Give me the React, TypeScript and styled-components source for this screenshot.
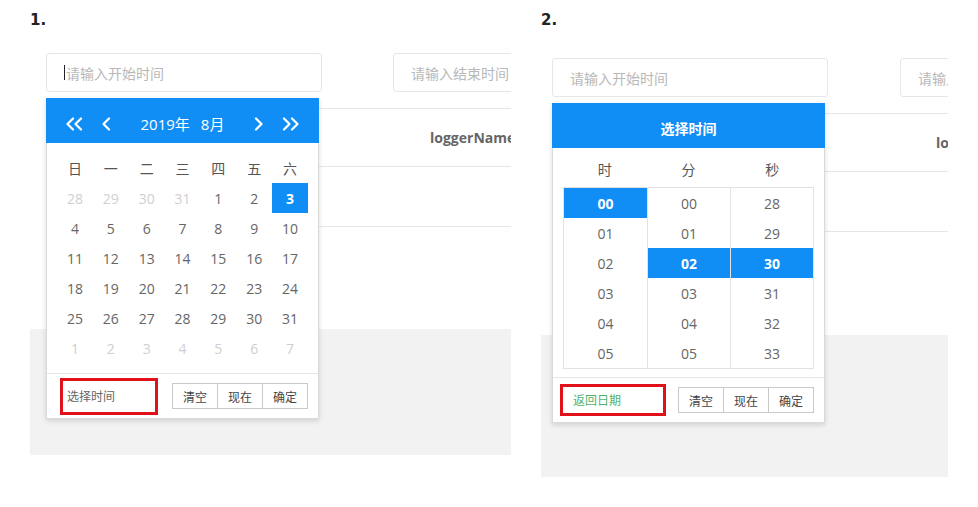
import styled, { createGlobalStyle } from "styled-components";

const GlobalStyle = createGlobalStyle`
  body {
    margin: 0;
    background: #fff;
    font-family: "Open Sans", "Noto Sans CJK SC", sans-serif;
  }
`;

const Page = styled.div`
  display: flex;
  gap: 30px;
  padding-left: 30px;
`;

const Column = styled.div<{ $width: number }>`
  display: flex;
  flex-direction: column;
  width: ${(p) => p.$width}px;
  flex-shrink: 0;
`;

const Label = styled.div`
  height: 40px;
  line-height: 40px;
  font-family: "DejaVu Sans", sans-serif;
  font-weight: bold;
  font-size: 15px;
  color: #222;
`;

const Shot = styled.div`
  position: relative;
  display: flex;
  flex-direction: column;
  overflow: hidden;
`;

const InputRow = styled.div<{ $top: number; $inset: number; $gap: number }>`
  display: flex;
  gap: ${(p) => p.$gap}px;
  margin-top: ${(p) => p.$top}px;
  padding-left: ${(p) => p.$inset}px;
`;

const TextInput = styled.div<{ $width: number }>`
  display: flex;
  align-items: center;
  flex-shrink: 0;
  box-sizing: border-box;
  width: ${(p) => p.$width}px;
  height: 39px;
  padding-left: 17px;
  border: 1px solid #e6e6e6;
  border-radius: 3px;
  font-size: 14px;
  color: #b8b8b8;
  white-space: nowrap;
`;

const Caret = styled.span`
  width: 1px;
  height: 15px;
  margin-right: 1px;
  background: #222;
`;

const Table = styled.div<{ $inset: number }>`
  margin-top: 16px;
  margin-left: ${(p) => p.$inset}px;
  border-top: 1px solid #e6e6e6;
`;

const HeadRow = styled.div`
  display: flex;
  align-items: center;
  box-sizing: border-box;
  height: 58px;
  padding-left: 384px;
  border-bottom: 1px solid #e6e6e6;
  font-size: 14px;
  font-weight: bold;
  color: #666;
  white-space: nowrap;
`;

const BodyRow = styled.div`
  box-sizing: border-box;
  height: 60px;
  border-bottom: 1px solid #e6e6e6;
`;

const GrayArea = styled.div<{ $top: number; $height: number }>`
  margin-top: ${(p) => p.$top}px;
  height: ${(p) => p.$height}px;
  background: #f2f2f2;
`;

const BLUE = "#108ef5";

const Popup = styled.div<{ $left: number; $top: number }>`
  position: absolute;
  left: ${(p) => p.$left}px;
  top: ${(p) => p.$top}px;
  width: 273px;
  box-sizing: border-box;
  border: 1px solid #d9d9d9;
  background: #fff;
  box-shadow: 0 2px 5px rgba(0, 0, 0, 0.14);
  font-size: 14px;
`;

const CalHeader = styled.div`
  display: grid;
  grid-template-columns: 1fr auto 1fr;
  align-items: center;
  box-sizing: border-box;
  height: 45px;
  margin: -1px -1px 0;
  padding: 6px 20px 0;
  background: ${BLUE};
  color: #fff;
  font-size: 15px;
`;

const NavGroup = styled.div<{ $end?: boolean }>`
  display: flex;
  align-items: center;
  gap: 19px;
  justify-content: ${(p) => (p.$end ? "flex-end" : "flex-start")};
`;

const Title = styled.div`
  display: flex;
  gap: 11px;
`;

const TimeHeader = styled.div`
  display: flex;
  align-items: center;
  justify-content: center;
  box-sizing: border-box;
  height: 45px;
  margin: -1px -1px 0;
  padding-top: 4px;
  background: ${BLUE};
  color: #fff;
  font-size: 14px;
  font-weight: bold;
`;

const CalBody = styled.div`
  padding: 10px;
`;

const DayGrid = styled.div`
  display: grid;
  grid-template-columns: repeat(7, 1fr);
  grid-auto-rows: 30px;
`;

const Cell = styled.div<{ $tone: "head" | "muted" | "normal" | "active" }>`
  display: flex;
  align-items: center;
  justify-content: center;
  color: ${(p) =>
    p.$tone === "muted" ? "#cfcfcf" : p.$tone === "head" ? "#555" : p.$tone === "active" ? "#fff" : "#666"};
  background: ${(p) => (p.$tone === "active" ? BLUE : "transparent")};
  font-weight: ${(p) => (p.$tone === "active" ? "bold" : "normal")};
`;

const TimeBody = styled.div`
  padding: 6px 10px 8px;
`;

const TimeLabels = styled.div`
  display: grid;
  grid-template-columns: repeat(3, 1fr);
  height: 30px;
  margin-bottom: 3px;
  align-items: center;
  justify-items: center;
  color: #555;
`;

const TimeGrid = styled.div`
  display: grid;
  grid-template-columns: repeat(3, 1fr);
  border: 1px solid #e2e2e2;
`;

const TimeColumn = styled.div`
  display: flex;
  flex-direction: column;
  & + & {
    border-left: 1px solid #e2e2e2;
  }
`;

const TimeCell = styled.div<{ $active?: boolean }>`
  display: flex;
  align-items: center;
  justify-content: center;
  height: 30px;
  color: ${(p) => (p.$active ? "#fff" : "#666")};
  background: ${(p) => (p.$active ? BLUE : "transparent")};
  font-weight: ${(p) => (p.$active ? "bold" : "normal")};
`;

const Footer = styled.div`
  display: flex;
  align-items: center;
  justify-content: space-between;
  box-sizing: border-box;
  height: 45px;
  padding: 0 10px;
  border-top: 1px solid #e6e6e6;
`;

const Marked = styled.span<{ $w: number; $h: number; $ml: number; $pl: number; $color: string }>`
  display: flex;
  align-items: center;
  box-sizing: border-box;
  width: ${(p) => p.$w}px;
  height: ${(p) => p.$h}px;
  margin-left: ${(p) => p.$ml}px;
  padding-left: ${(p) => p.$pl}px;
  border: 3px solid #e1111a;
  font-size: 12px;
  color: ${(p) => p.$color};
`;

const Buttons = styled.div`
  display: flex;
`;

const Btn = styled.span`
  display: flex;
  align-items: center;
  justify-content: center;
  box-sizing: border-box;
  width: 46px;
  height: 26px;
  padding-top: 2px;
  border: 1px solid #c9c9c9;
  background: #fff;
  font-size: 12px;
  color: #444;
  & + & {
    margin-left: -1px;
  }
`;

function Chevron({ double, right }: { double?: boolean; right?: boolean }) {
  const w = double ? 17 : 9;
  return (
    <svg width={w} height={14} viewBox={`0 0 ${w} 14`} style={{ transform: right ? "scaleX(-1)" : undefined }}>
      <g fill="none" stroke="#fff" strokeWidth={2.2} strokeLinecap="round" strokeLinejoin="round">
        <polyline points="7,1.5 1.5,7 7,12.5" />
        {double && <polyline points="15,1.5 9.5,7 15,12.5" />}
      </g>
    </svg>
  );
}

const weekdays = ["日", "一", "二", "三", "四", "五", "六"];

type Day = { n: number; tone: "muted" | "normal" | "active" };

function buildDays(): Day[] {
  const days: Day[] = [];
  [28, 29, 30, 31].forEach((n) => days.push({ n, tone: "muted" }));
  for (let n = 1; n <= 31; n++) days.push({ n, tone: n === 3 ? "active" : "normal" });
  for (let n = 1; n <= 7; n++) days.push({ n, tone: "muted" });
  return days;
}

function FooterButtons() {
  return (
    <Buttons>
      <Btn>清空</Btn>
      <Btn>现在</Btn>
      <Btn>确定</Btn>
    </Buttons>
  );
}

function DatePanel() {
  return (
    <Popup $left={16} $top={58}>
      <CalHeader>
        <NavGroup>
          <Chevron double />
          <Chevron />
        </NavGroup>
        <Title>
          <span>2019年</span>
          <span>8月</span>
        </Title>
        <NavGroup $end>
          <Chevron right />
          <Chevron double right />
        </NavGroup>
      </CalHeader>
      <CalBody>
        <DayGrid>
          {weekdays.map((d) => (
            <Cell key={d} $tone="head">
              {d}
            </Cell>
          ))}
          {buildDays().map((d, i) => (
            <Cell key={i} $tone={d.tone}>
              {d.n}
            </Cell>
          ))}
        </DayGrid>
      </CalBody>
      <Footer>
        <Marked $w={98} $h={37} $ml={3} $pl={4} $color="#666">
          选择时间
        </Marked>
        <FooterButtons />
      </Footer>
    </Popup>
  );
}

const pad = (n: number) => String(n).padStart(2, "0");

const timeColumns = [
  { start: 0, active: 0 },
  { start: 0, active: 2 },
  { start: 28, active: 30 },
];

function TimePanel() {
  return (
    <Popup $left={11} $top={63}>
      <TimeHeader>选择时间</TimeHeader>
      <TimeBody>
        <TimeLabels>
          <span>时</span>
          <span>分</span>
          <span>秒</span>
        </TimeLabels>
        <TimeGrid>
          {timeColumns.map((c, ci) => (
            <TimeColumn key={ci}>
              {Array.from({ length: 6 }, (_, i) => c.start + i).map((v) => (
                <TimeCell key={v} $active={v === c.active}>
                  {pad(v)}
                </TimeCell>
              ))}
            </TimeColumn>
          ))}
        </TimeGrid>
      </TimeBody>
      <Footer>
        <Marked $w={106} $h={32} $ml={-3} $pl={10} $color="#4fb26b">
          返回日期
        </Marked>
        <FooterButtons />
      </Footer>
    </Popup>
  );
}

export default function App() {
  return (
    <>
      <GlobalStyle />
      <Page>
        <Column $width={481}>
          <Label>1.</Label>
          <Shot>
            <InputRow $top={13} $inset={16} $gap={71}>
              <TextInput $width={276}>
                <Caret />
                请输入开始时间
              </TextInput>
              <TextInput $width={200}>请输入结束时间</TextInput>
            </InputRow>
            <Table $inset={16}>
              <HeadRow>loggerName</HeadRow>
              <BodyRow />
            </Table>
            <GrayArea $top={102} $height={126} />
            <DatePanel />
          </Shot>
        </Column>
        <Column $width={407}>
          <Label>2.</Label>
          <Shot>
            <InputRow $top={18} $inset={11} $gap={72}>
              <TextInput $width={276}>请输入开始时间</TextInput>
              <TextInput $width={200}>请输入结束时间</TextInput>
            </InputRow>
            <Table $inset={11}>
              <HeadRow>loggerName</HeadRow>
              <BodyRow />
            </Table>
            <GrayArea $top={103} $height={142} />
            <TimePanel />
          </Shot>
        </Column>
      </Page>
    </>
  );
}
